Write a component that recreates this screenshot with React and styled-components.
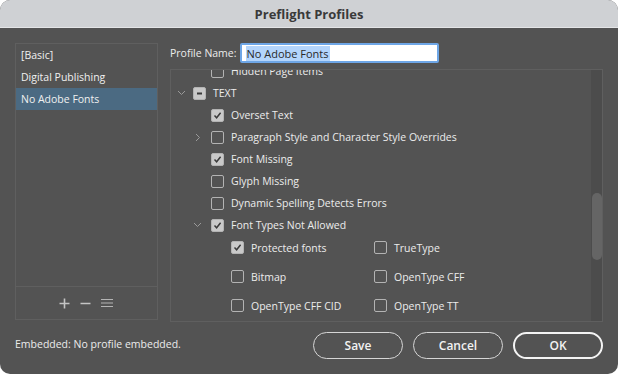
import styled, { createGlobalStyle } from 'styled-components';

const GlobalStyle = createGlobalStyle`
	html, body {
		margin: 0;
		background: #ffffff;
	}
	body {
		font-family: 'Open Sans', 'Liberation Sans', sans-serif;
		font-size: 10.5px;
		-webkit-font-smoothing: antialiased;
	}
`;

const Window = styled.div`
	width: 618px;
	height: 374px;
	background: #535353;
	border-radius: 10px;
	overflow: hidden;
	display: flex;
	flex-direction: column;
	color: #ececec;
`;

const TitleBar = styled.div`
	height: 27px;
	flex: none;
	background: #cfd1d4;
	border-bottom: 1px solid #e4e5e7;
	display: flex;
	align-items: center;
	justify-content: center;
	font-weight: 700;
	font-size: 13px;
	color: #3a3a3a;
`;

const Body = styled.div`
	flex: 1;
	display: flex;
	flex-direction: column;
	padding: 15px 15px 0 15px;
`;

const Main = styled.div`
	display: flex;
	gap: 12px;
`;

const LeftCol = styled.div`
	width: 143px;
	height: 277px;
	border: 1px solid #5f5f5f;
	box-sizing: border-box;
	display: flex;
	flex-direction: column;
`;

const ProfileList = styled.div`
	flex: 1;
	border-bottom: 1px solid #5f5f5f;
`;

const ProfileItem = styled.div`
	height: 22px;
	line-height: 22px;
	padding-left: 5px;
	background: ${({ $selected }) => ($selected ? '#4b6a82' : 'transparent')};
	color: #f0f0f0;
`;

const ListFooter = styled.div`
	height: 32px;
	flex: none;
	display: flex;
	align-items: center;
	justify-content: center;
	gap: 10px;
	padding-right: 2px;
	color: #bdbdbd;
`;

const RightCol = styled.div`
	flex: 1;
	display: flex;
	flex-direction: column;
	gap: 6px;
`;

const NameRow = styled.div`
	display: flex;
	align-items: center;
	gap: 3px;
	height: 20px;
`;

const NameInput = styled.div`
	width: 191px;
	height: 16px;
	background: #ffffff;
	border: 2px solid #6ea6e6;
	border-radius: 2px;
	display: flex;
	align-items: center;
	padding-left: 4px;
	color: #2a2a2a;
	font-size: 11px;

	span {
		background: #b4d5fc;
		padding: 0 1px;
	}
`;

const TreePanel = styled.div`
	height: 253px;
	border: 1px solid #5f5f5f;
	box-sizing: border-box;
	display: flex;
	overflow: hidden;
`;

const TreeScroll = styled.div`
	flex: 1;
	overflow: hidden;
`;

const TreeInner = styled.div`
	margin-top: -10px;
`;

const Row = styled.div`
	display: flex;
	align-items: center;
	height: 22px;
	padding-left: ${({ $indent }) => $indent}px;
`;

const FontGrid = styled.div`
	margin-top: -3px;
	display: grid;
	grid-template-columns: 143px 1fr;
	grid-auto-rows: 29px;
	padding-left: 60px;
`;

const Twisty = styled.span`
	width: ${({ $w }) => $w || 16}px;
	flex: none;
	display: flex;
	align-items: center;
`;

const Box = styled.span`
	width: 11px;
	height: 11px;
	flex: none;
	border: 1px solid #b3b3b3;
	border-radius: 2px;
	background: ${({ $on }) => ($on ? '#c9c9c9' : 'transparent')};
	display: flex;
	align-items: center;
	justify-content: center;
	margin-right: 7px;
`;

const Label = styled.span`
	white-space: nowrap;
	color: #ececec;
`;

const Cell = styled.div`
	display: flex;
	align-items: center;
`;

const ScrollTrack = styled.div`
	width: 11px;
	flex: none;
	background: #4c4c4c;
	padding-top: 123px;
	box-sizing: border-box;
`;

const ScrollThumb = styled.div`
	margin: 0 auto;
	width: 10px;
	height: 67px;
	border-radius: 5px;
	background: #656565;
`;

const BottomRow = styled.div`
	display: flex;
	align-items: center;
	margin-top: 10px;
	height: 27px;
`;

const Status = styled.div`
	flex: 1;
	padding-bottom: 3px;
`;

const Button = styled.button`
	width: 90px;
	height: 27px;
	margin-left: 10px;
	border-radius: 14px;
	background: transparent;
	border: ${({ $primary }) => ($primary ? '2px solid #f4f4f4' : '1.5px solid #d6d6d6')};
	color: #f2f2f2;
	font-family: inherit;
	font-size: 12px;
	font-weight: 600;
	padding: 0;
`;

const Check = () => (
	<svg width='9' height='9' viewBox='0 0 9 9'>
		<path d='M1.5 4.6 L3.6 6.8 L7.6 1.8' fill='none' stroke='#3a3a3a' strokeWidth='1.5' />
	</svg>
);

const Dash = () => (
	<svg width='9' height='9' viewBox='0 0 9 9'>
		<path d='M2 4.5 H7' stroke='#3a3a3a' strokeWidth='1.8' />
	</svg>
);

const ChevronDown = () => (
	<svg width='9' height='6' viewBox='0 0 9 6'>
		<path d='M1 1 L4.5 4.5 L8 1' fill='none' stroke='#9a9a9a' strokeWidth='1' />
	</svg>
);

const ChevronRight = () => (
	<svg width='6' height='9' viewBox='0 0 6 9'>
		<path d='M1 1 L4.5 4.5 L1 8' fill='none' stroke='#9a9a9a' strokeWidth='1' />
	</svg>
);

function Item({ on, mixed, label }) {
	return (
		<>
			<Box $on={on || mixed}>{mixed ? <Dash /> : on ? <Check /> : null}</Box>
			<Label>{label}</Label>
		</>
	);
}

const fontTypes = [
	{ label: 'Protected fonts', on: true },
	{ label: 'TrueType' },
	{ label: 'Bitmap' },
	{ label: 'OpenType CFF' },
	{ label: 'OpenType CFF CID' },
	{ label: 'OpenType TT' },
];

export default function App() {
	return (
		<>
			<GlobalStyle />
			<Window>
				<TitleBar>Preflight Profiles</TitleBar>
				<Body>
					<Main>
						<LeftCol>
							<ProfileList>
								<ProfileItem>[Basic]</ProfileItem>
								<ProfileItem>Digital Publishing</ProfileItem>
								<ProfileItem $selected>No Adobe Fonts</ProfileItem>
							</ProfileList>
							<ListFooter>
								<svg width='11' height='11' viewBox='0 0 11 11'>
									<path d='M5.5 0.5 V10.5 M0.5 5.5 H10.5' stroke='#c4c4c4' strokeWidth='1.6' />
								</svg>
								<svg width='11' height='11' viewBox='0 0 11 11'>
									<path d='M0.5 5.5 H10.5' stroke='#c4c4c4' strokeWidth='1.6' />
								</svg>
								<svg width='12' height='10' viewBox='0 0 12 10'>
									<path d='M0 1.5 H12 M0 5 H12 M0 8.5 H12' stroke='#b4b4b4' strokeWidth='1.2' />
								</svg>
							</ListFooter>
						</LeftCol>

						<RightCol>
							<NameRow>
								<Label>Profile Name:</Label>
								<NameInput>
									<span>No Adobe Fonts</span>
								</NameInput>
							</NameRow>

							<TreePanel>
								<TreeScroll>
									<TreeInner>
										<Row $indent={40}>
											<Item label='Hidden Page Items' />
										</Row>
										<Row $indent={6}>
											<Twisty>
												<ChevronDown />
											</Twisty>
											<Item mixed label='TEXT' />
										</Row>
										<Row $indent={40}>
											<Item on label='Overset Text' />
										</Row>
										<Row $indent={24}>
											<Twisty>
												<ChevronRight />
											</Twisty>
											<Item label='Paragraph Style and Character Style Overrides' />
										</Row>
										<Row $indent={40}>
											<Item on label='Font Missing' />
										</Row>
										<Row $indent={40}>
											<Item label='Glyph Missing' />
										</Row>
										<Row $indent={40}>
											<Item label='Dynamic Spelling Detects Errors' />
										</Row>
										<Row $indent={22}>
											<Twisty $w={18}>
												<ChevronDown />
											</Twisty>
											<Item on label='Font Types Not Allowed' />
										</Row>
										<FontGrid>
											{fontTypes.map((f) => (
												<Cell key={f.label}>
													<Item on={f.on} label={f.label} />
												</Cell>
											))}
										</FontGrid>
									</TreeInner>
								</TreeScroll>
								<ScrollTrack>
									<ScrollThumb />
								</ScrollTrack>
							</TreePanel>
						</RightCol>
					</Main>

					<BottomRow>
						<Status>Embedded: No profile embedded.</Status>
						<Button>Save</Button>
						<Button>Cancel</Button>
						<Button $primary>OK</Button>
					</BottomRow>
				</Body>
			</Window>
		</>
	);
}
